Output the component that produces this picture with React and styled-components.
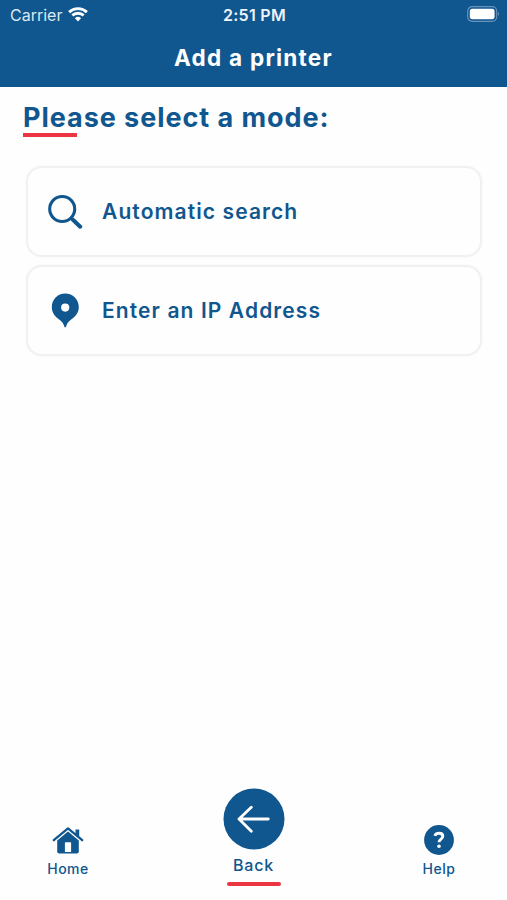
import React from 'react';
import styled, { createGlobalStyle } from 'styled-components';

const BLUE = '#10568f';
const RED = '#eb3642';

const GlobalStyle = createGlobalStyle`
    * {
        box-sizing: border-box;
    }

    body {
        margin: 0;
        background: #fefefe;
        font-family: Inter, 'Open Sans', sans-serif;
    }
`;

const Screen = styled.div`
    display: flex;
    flex-direction: column;
    width: 507px;
    height: 900px;
    color: ${BLUE};
    background: #fefefe;
`;

const TopArea = styled.header`
    height: 87px;
    color: #fff;
    background: ${BLUE};
`;

const StatusBar = styled.div`
    display: grid;
    grid-template-columns: 1fr auto 1fr;
    align-items: center;
    height: 29px;
    padding: 0 7px 0 10px;
    font-size: 16px;
    line-height: 20px;

    .carrier {
        display: flex;
        align-items: center;
        gap: 6px;
        color: #dbe8f2;
    }

    .time {
        margin-left: -1px;
        font-weight: 600;
        color: #eef4f9;
        letter-spacing: 0.3px;
    }

    .battery {
        justify-self: end;
        display: block;
        margin-top: -1px;
    }
`;

const Title = styled.h1`
    margin: 0;
    font-size: 22.5px;
    line-height: 57px;
    font-weight: 700;
    text-align: center;
    letter-spacing: ${({ $spacing }) => $spacing}px;
`;

const Content = styled.main`
    flex: 1;
    padding: 15px 25px 0 26px;
`;

const Heading = styled.h2`
    margin: 0 0 0 -3px;
    font-size: 27px;
    line-height: 32px;
    font-weight: 700;
    white-space: nowrap;
    letter-spacing: ${({ $spacing }) => $spacing}px;
`;

const Underline = styled.div`
    width: 54px;
    height: 4px;
    margin: ${({ $margin }) => $margin || 0};
    border-radius: ${({ $round }) => ($round ? 2 : 0)}px;
    background: ${RED};
`;

const ModeList = styled.div`
    display: flex;
    flex-direction: column;
    gap: 8px;
    margin-top: 29px;
`;

const ModeCard = styled.button`
    display: flex;
    align-items: center;
    width: 456px;
    height: 91px;
    padding: 0 0 0 20px;
    border: 2px solid #f1f1f1;
    border-radius: 16px;
    background: #fefefe;
    box-shadow: 0 0 2px #f1f1f1;
    color: inherit;
    font-family: inherit;
    font-size: 21px;
    font-weight: 600;
    letter-spacing: ${({ $spacing }) => $spacing}px;

    svg {
        flex: none;
        margin-right: 19px;
    }
`;

const TabBar = styled.nav`
    display: flex;
    justify-content: space-between;
    align-items: flex-end;
    height: 117px;
    padding: 0 28px 13px;
`;

const Tab = styled.div`
    display: flex;
    flex-direction: column;
    align-items: center;
    width: 80px;
    padding-bottom: ${({ $center }) => ($center ? 1 : 8)}px;
    font-size: ${({ $center }) => ($center ? 16 : 14)}px;
    line-height: 20px;
    font-weight: 500;
    letter-spacing: ${({ $spacing }) => $spacing}px;

    svg {
        display: block;
        margin-bottom: ${({ $center }) => ($center ? 5 : 4)}px;
    }
`;

const WifiIcon = () => (
    <svg width="20" height="15" viewBox="0 0 20 15" fill="none" stroke="#fff">
        <path d="M1.1 5.1C6.1.5 13.9.5 18.9 5.1" strokeWidth="2.9" />
        <path d="M4.3 8.4C7.5 5.5 12.5 5.5 15.7 8.4" strokeWidth="2.8" />
        <path d="M6.9 11.2Q10 8.5 13.1 11.2L10 14.5Z" fill="#fff" stroke="none" />
    </svg>
);

const BatteryIcon = () => (
    <svg className="battery" width="33" height="16" viewBox="0 0 33 16">
        <rect x=".7" y=".7" width="29" height="14.6" rx="4.5" fill="none" stroke="#6793ba" strokeWidth="1.2" />
        <rect x="2.8" y="2.8" width="24.8" height="10.4" rx="2.6" fill="#fff" />
        <path d="M31 5.7Q32.8 8 31 10.3Z" fill="#7ea5c6" />
    </svg>
);

const SearchIcon = () => (
    <svg width="35" height="36" viewBox="0 0 35 36" fill="none" stroke={BLUE}>
        <circle cx="14.2" cy="15" r="12.5" strokeWidth="3.1" />
        <path d="M23 23.8L26 26.8" strokeWidth="3.2" />
        <path d="M25.2 26L32.2 32.7" strokeWidth="4" strokeLinecap="round" />
    </svg>
);

const PinIcon = () => (
    <svg width="35" height="36" viewBox="0 0 35 36">
        <path
            d="M17.2 .6C9.6 .6 3.8 6.6 3.8 14.1C3.8 20.2 7.4 24.2 12.4 27.4C14.4 28.7 15.5 30.9 16.4 33.7Q17.2 35.2 18 33.7C18.9 30.9 20 28.7 22 27.4C27 24.2 30.8 20.2 30.8 14.1C30.8 6.6 25 .6 17.2 .6Z"
            fill={BLUE}
        />
        <circle cx="17.2" cy="14.6" r="4.1" fill="#fff" />
    </svg>
);

const HomeIcon = () => (
    <svg width="32" height="29" viewBox="0 0 32 29">
        <path d="M1.8 14.2L16 2.4L30.2 14.2" fill="none" stroke={BLUE} strokeWidth="2.3" strokeLinecap="round" strokeLinejoin="round" />
        <path d="M23.5 3.4H27.2V10.8L23.5 8Z" fill={BLUE} />
        <path d="M16 5.6L26.8 14.6V25.5Q26.8 27.5 24.8 27.5H7.2Q5.2 27.5 5.2 25.5V14.6Z" fill={BLUE} />
        <rect x="12.9" y="16.2" width="6.2" height="9.8" rx=".6" fill="#fff" />
    </svg>
);

const BackIcon = () => (
    <svg width="62" height="62" viewBox="0 0 62 62">
        <circle cx="31" cy="31" r="30.5" fill={BLUE} />
        <path d="M28.3 19.2L16 31L28.3 43.2M16.5 31H45.3" fill="none" stroke="#fff" strokeWidth="2.8" strokeLinecap="round" strokeLinejoin="round" />
    </svg>
);

const HelpIcon = () => (
    <svg width="30" height="30" viewBox="0 0 30 30">
        <circle cx="15" cy="15" r="14.9" fill={BLUE} />
        <path d="M10.9 10.8C11.4 9.1 12.9 8.3 15 8.3C17.3 8.3 18.8 9.4 18.8 11.3C18.8 14.1 15 14.1 15 17.3" fill="none" stroke="#fff" strokeWidth="2.9" />
        <circle cx="15" cy="21.3" r="1.8" fill="#fff" />
    </svg>
);

const App = () => {
    return (
        <>
            <GlobalStyle />
            <Screen>
                <TopArea>
                    <StatusBar>
                        <span className="carrier">Carrier <WifiIcon /></span>
                        <span className="time">2:51 PM</span>
                        <BatteryIcon />
                    </StatusBar>
                    <Title $spacing={1.25}>Add a printer</Title>
                </TopArea>
                <Content>
                    <Heading $spacing={0.95}>Please select a mode:</Heading>
                    <Underline $margin="-1px 0 0 -3px" />
                    <ModeList>
                        <ModeCard $spacing={1.1}>
                            <SearchIcon />
                            Automatic search
                        </ModeCard>
                        <ModeCard $spacing={1.1}>
                            <PinIcon />
                            Enter an IP Address
                        </ModeCard>
                    </ModeList>
                </Content>
                <TabBar>
                    <Tab $spacing={0.5}>
                        <HomeIcon />
                        Home
                    </Tab>
                    <Tab $center $spacing={0.8}>
                        <BackIcon />
                        Back
                        <Underline $round $margin="7px 0 0" />
                    </Tab>
                    <Tab $spacing={0.5}>
                        <HelpIcon />
                        Help
                    </Tab>
                </TabBar>
            </Screen>
        </>
    );
};

export default App;
